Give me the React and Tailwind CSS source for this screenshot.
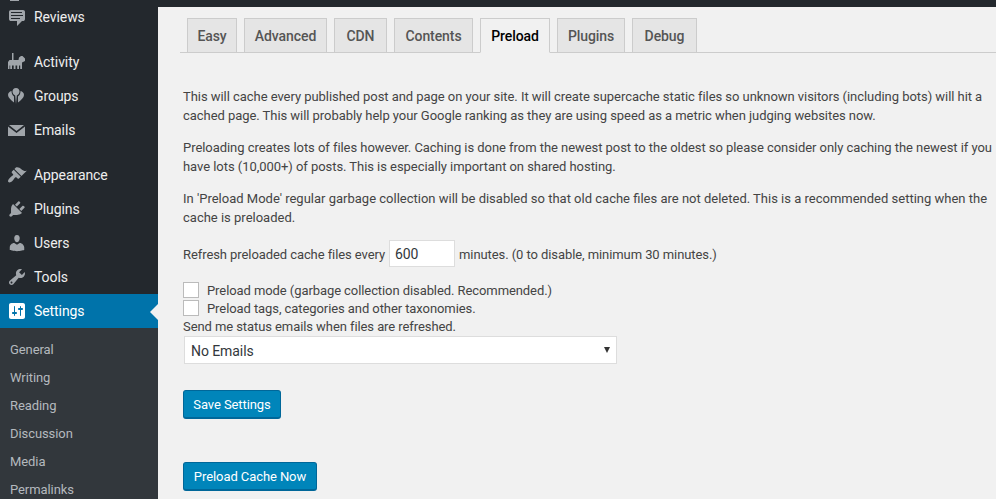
import React from 'react';

const font = "font-['Roboto',sans-serif] tracking-[-0.08px]";

const icons = {
    reviews: 'M4 3h12c.55 0 1.02.2 1.41.59S18 4.45 18 5v7c0 .55-.2 1.02-.59 1.41S16.55 14 16 14h-1l-5 5v-5H4c-.55 0-1.02-.2-1.41-.59S2 12.55 2 12V5c0-.55.2-1.02.59-1.41S3.45 3 4 3zm11 2H4v1h11V5zm1 3H4v1h12V8zm-3 3H4v1h9v-1z',
    activity: 'M5 1h1.500v7H11.500l.5-2.500L14 4h1.500L18 6.500V9l-3 1.500V17h-1.800v-3.500H12V17h-1.800v-3.500H8.500V17H6.700v-3.500H5V17H3.200v-3.500H2.500V17H1V10l1.500-2H5z',
    groups: 'M9 2c2.200 0 3.500 1.600 3.500 3.600 0 1.800-1.200 3.200-2.700 4L9 18l-.8-8.400C6.700 8.800 5.500 7.400 5.500 5.600 5.500 3.600 6.800 2 9 2zM4.500 5C2.500 5.500 1 7 1 9c0 2.500 3 5 6 7.500v-6C5.500 9.500 4.500 7.500 4.500 5zM13.500 5c2 .5 3.500 2 3.500 4 0 2.500-3 5-6 7.500v-6c1.500-1 2.500-3 2.500-5z',
    email: 'M2 5h15L9.500 11zM1 6.500l8.500 6.500L18 6.500V16H1z',
    appearance: 'M14.48 11.06L7.41 3.99l1.5-1.5c.5-.56 2.3-.47 3.51.32 1.21.8 1.43 1.28 2.91 2.1 1.18.64 2.45 1.26 4.45.85zm-.71.71L6.7 4.7 4.93 6.47c-.39.39-.39 1.02 0 1.41l1.06 1.06c.39.39.39 1.03 0 1.42-.6.6-1.43 1.11-2.21 1.69-.35.26-.7.53-1.01.84C1.43 14.23.4 16.08 1.4 17.07c.99 1 2.84-.03 4.18-1.36.31-.31.58-.66.85-1.02.57-.78 1.08-1.61 1.69-2.21.39-.39 1.02-.39 1.41 0l1.06 1.06c.39.39 1.02.39 1.41 0z',
    plugins: 'M13.11 4.36L9.87 7.6 8 5.73l3.24-3.24c.35-.34 1.05-.2 1.56.32.52.51.66 1.21.31 1.55zm-8 1.77l.91-1.12 9.01 9.01-1.19.84c-.71.71-2.63 1.16-3.82 1.16H6.14L4.9 17.26c-.59.59-1.54.59-2.12 0-.59-.58-.59-1.53 0-2.12l1.24-1.24v-3.88c0-1.13.4-3.19 1.09-3.89zm7.26 3.97l3.24-3.24c.34-.35 1.04-.21 1.55.31.52.51.66 1.21.31 1.55l-3.24 3.25z',
    users: 'M10 9.25c-2.27 0-2.73-3.44-2.73-3.44C7 4.02 7.82 2 9.97 2c2.16 0 2.98 2.02 2.71 3.81 0 0-.41 3.44-2.68 3.44zm0 2.57L12.72 10c2.39 0 4.52 2.33 4.52 4.53v2.49s-3.65 1.13-7.24 1.13c-3.65 0-7.24-1.13-7.24-1.13v-2.49c0-2.25 1.94-4.48 4.47-4.48z',
    tools: 'M16.68 9.77c-1.34 1.34-3.3 1.67-4.95.99l-5.41 6.52c-.99.99-2.59.99-3.58 0s-.99-2.59 0-3.57l6.52-5.42c-.68-1.65-.35-3.61.99-4.95 1.28-1.28 3.12-1.62 4.72-1.06l-2.89 2.89 2.82 2.82 2.86-2.87c.53 1.58.18 3.39-1.08 4.65zM3.81 16.21c.4.39 1.04.39 1.43 0 .4-.4.4-1.04 0-1.43-.39-.4-1.03-.4-1.43 0-.39.39-.39 1.03 0 1.43z',
    settings: 'M18 16V4c0-1.1-.9-2-2-2H4c-1.1 0-2 .9-2 2v12c0 1.1.9 2 2 2h12c1.1 0 2-.9 2-2zM8 11h1c.55 0 1 .45 1 1s-.45 1-1 1H8v1.5c0 .28-.22.5-.5.5s-.5-.22-.5-.5V13H6c-.55 0-1-.45-1-1s.45-1 1-1h1V5.5c0-.28.22-.5.5-.5s.5.22.5.5V11zm5-2h-1c-.55 0-1-.45-1-1s.45-1 1-1h1V5.5c0-.28.22-.5.5-.5s.5.22.5.5V7h1c.55 0 1 .45 1 1s-.45 1-1 1h-1v5.5c0 .28-.22.5-.5.5s-.5-.22-.5-.5V9z',
};

const tabs = [
    { label: 'Easy', width: 'w-[50px]' },
    { label: 'Advanced', width: 'w-[83px]' },
    { label: 'CDN', width: 'w-[53px]' },
    { label: 'Contents', width: 'w-[79px]' },
    { label: 'Preload', width: 'w-[70px]', active: true },
    { label: 'Plugins', width: 'w-[68px]' },
    { label: 'Debug', width: 'w-[65px]' },
];

const MenuItem = ({ icon, label, active, className = '' }) => (
    <div className={`relative flex h-[34px] items-center ${active ? 'bg-[#0073aa] text-white' : 'text-[#eeeeee]'} ${className}`}>
        <svg viewBox="0 0 20 20" className={`ml-[7px] h-5 w-5 fill-current ${active ? 'text-white' : 'text-[#a0a5aa]'}`}>
            <path fillRule="evenodd" d={icons[icon]} />
        </svg>
        <span className="ml-[7px] text-sm">{label}</span>
        {active && <div className="absolute right-0 top-[10px] h-0 w-0 border-y-[8px] border-r-[8px] border-y-transparent border-r-[#f1f1f1]" />}
    </div>
);

const Tab = ({ label, width, active }) => (
    <div className={`-mb-px flex h-[35px] items-center justify-center border border-[#cccccc] text-sm font-medium ${width} ${active ? 'border-b-[#f1f1f1] bg-[#f1f1f1] text-black' : 'bg-[#e5e5e5] text-[#555555]'}`}>
        {label}
    </div>
);

const App = () => {
    return (
        <div className={`flex h-[499px] w-[996px] overflow-hidden bg-[#f1f1f1] ${font}`}>
            {/* Admin menu */}
            <div className="w-[158px] shrink-0 bg-[#23282d]">
                <div className="-mb-px ml-[10px] h-px w-[9px] bg-[#a0a5aa]" />
                <MenuItem icon="reviews" label="Reviews" className="mb-[11px]" />
                <MenuItem icon="activity" label="Activity" />
                <MenuItem icon="groups" label="Groups" />
                <MenuItem icon="email" label="Emails" className="mb-[11px]" />
                <MenuItem icon="appearance" label="Appearance" />
                <MenuItem icon="plugins" label="Plugins" />
                <MenuItem icon="users" label="Users" />
                <MenuItem icon="tools" label="Tools" />
                <MenuItem icon="settings" label="Settings" active />
                <div className="h-[171px] bg-[#32373c] pt-[8px] text-[13px] text-[#b4b9be]">
                    {['General', 'Writing', 'Reading', 'Discussion', 'Media', 'Permalinks'].map((item) => (
                        <div key={item} className="flex h-7 items-center pl-[10px]">{item}</div>
                    ))}
                </div>
            </div>

            {/* Page content */}
            <div className="min-w-0 flex-1">
                <div className="h-[7px] bg-[#23282d]" />
                <div className="w-[838px] pl-[25px] text-[13px] leading-[19px] text-[#444444]">
                    <div className="-ml-[3px] mt-[11px] flex gap-[7px] border-b border-[#cccccc] pl-[7px]">
                        {tabs.map((tab) => (
                            <Tab key={tab.label} {...tab} />
                        ))}
                    </div>
                    <p className="mt-[34px] tracking-[-0.05px]">This will cache every published post and page on your site. It will create supercache static files so unknown visitors (including bots) will hit a cached page. This will probably help your Google ranking as they are using speed as a metric when judging websites now.</p>
                    <p className="mt-[13px] tracking-[-0.05px]">Preloading creates lots of files however. Caching is done from the newest post to the oldest so please consider only caching the newest if you have lots (10,000+) of posts. This is especially important on shared hosting.</p>
                    <p className="mt-[13px] tracking-normal">In 'Preload Mode' regular garbage collection will be disabled so that old cache files are not deleted. This is a recommended setting when the cache is preloaded.</p>
                    <div className="mt-[13px] flex h-[27px] items-center">
                        <span className="pt-px">Refresh preloaded cache files every</span>
                        <div className="ml-[4px] flex h-[27px] w-[66px] items-center border border-[#dddddd] bg-white pl-[5px] pt-px text-sm text-[#32373c]">600</div>
                        <span className="ml-[4px] pt-px">minutes. (0 to disable, minimum 30 minutes.)</span>
                    </div>
                    <div className="mt-[14px] flex h-[18px] items-center">
                        <div className="h-4 w-4 border border-[#bbbbbb] bg-white" />
                        <span className="ml-2">Preload mode (garbage collection disabled. Recommended.)</span>
                    </div>
                    <div className="flex h-[18px] items-center">
                        <div className="h-4 w-4 border border-[#bbbbbb] bg-white" />
                        <span className="ml-2">Preload tags, categories and other taxonomies.</span>
                    </div>
                    <div className="flex h-[18px] items-center">Send me status emails when files are refreshed.</div>
                    <div className="ml-px mt-px flex h-[28px] w-[433px] items-center justify-between border border-[#dddddd] bg-white px-[6px] text-sm text-[#32373c]">
                        <span className="pt-px">No Emails</span>
                        <span className="h-0 w-0 border-x-[3px] border-t-[6px] border-x-transparent border-t-[#333333]" />
                    </div>
                    <button className="mt-[26px] block h-[29px] w-[98px] rounded-[3px] border border-[#006799] border-b-[2px] bg-[#0085ba] text-[13px] text-white">Save Settings</button>
                    <button className="mt-[43px] block h-[29px] w-[134px] rounded-[3px] border border-[#006799] border-b-[2px] bg-[#0085ba] text-[13px] text-white">Preload Cache Now</button>
                </div>
            </div>
        </div>
    );
};

export default App;
